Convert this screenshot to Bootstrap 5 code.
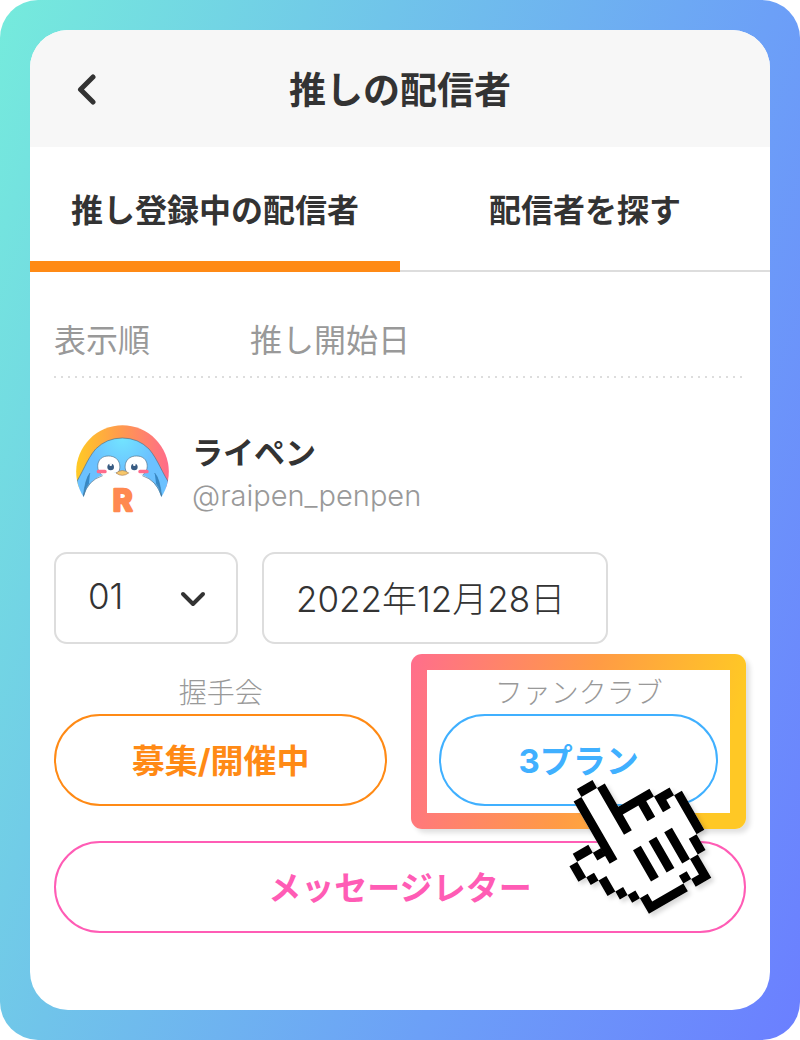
<!DOCTYPE html>
<html lang="ja">
<head>
<meta charset="utf-8">
<meta name="viewport" content="width=device-width, initial-scale=1">
<title>推しの配信者</title>
<link href="https://cdn.jsdelivr.net/npm/bootstrap@5.3.0/dist/css/bootstrap.min.css" rel="stylesheet">
<style>
  :root {
    --ink: #333;
    --muted: #999;
    --line: #ddd;
    --orange: #ff8a15;
    --blue: #40b0ff;
    --pink: #ff5cb5;
  }
  body {
    font-family: Inter, "Noto Sans CJK JP", sans-serif;
    color: var(--ink);
    background: #fff;
  }
  .backdrop {
    padding: 30px;
    border-radius: 38px;
    background: linear-gradient(109deg, #75ebdc 0%, #70c4ea 34%, #6ca0f7 67%, #6b7fff 100%);
  }
  .screen { border-radius: 38px; background: #fff; }
  .topbar { height: 117px; padding-top: 4px; background: #f7f7f7; }
  .topbar h1 { font-size: 37px; line-height: 48px; font-weight: 700; }
  .back-btn { left: 33px; }
  .tabs { height: 125px; }
  .tabs a {
    padding-top: 4px;
    font-size: 32px;
    font-weight: 700;
    color: var(--ink);
    border-bottom: 2px solid var(--line);
  }
  .tabs a.active { border-bottom: 11px solid var(--orange); padding-top: 13px; }
  .content { padding: 45px 24px; }
  .headings {
    gap: 100px;
    padding-bottom: 13px;
    font-size: 32px;
    line-height: 48px;
    color: var(--muted);
    background: repeating-linear-gradient(90deg, var(--line) 0 2px, transparent 2px 7px) bottom / 100% 2px no-repeat;
  }
  .profile { margin-top: 47px; margin-bottom: 34px; padding-left: 22px; gap: 23px; }
  .profile-name { font-size: 31px; line-height: 44px; font-weight: 700; padding-top: 6px; }
  .handle { font-size: 29px; line-height: 42px; font-weight: 300; color: var(--muted); }
  .fields { gap: 24px; }
  .field {
    height: 92px;
    border: 2px solid var(--line);
    border-radius: 13px;
    background: transparent;
    color: var(--ink);
    font-size: 35px;
    font-weight: 300;
    padding: 0 32px 4px;
  }
  .order-field { width: 184px; appearance: none; }
  .date-field { width: 346px; }
  .chevron { right: 32px; top: 38px; pointer-events: none; }
  .plans { margin-top: 10px; column-gap: 24px; }
  .plan { flex: 1 1 50%; padding-top: 16px; }
  .plan-label { padding-top: 2px; font-size: 28px; line-height: 42px; font-weight: 300; color: var(--muted); }
  .pill {
    --bs-btn-border-width: 2px;
    --bs-btn-border-radius: 46px;
    --bs-btn-font-size: 33px;
    --bs-btn-font-weight: 700;
    height: 92px;
    padding-top: 9px;
  }
  .pill-orange { --bs-btn-color: var(--orange); --bs-btn-border-color: var(--orange); }
  .pill-blue { --bs-btn-color: var(--blue); --bs-btn-border-color: var(--blue); }
  .pill-pink { --bs-btn-color: var(--pink); --bs-btn-border-color: var(--pink); }
  .highlight {
    padding: 16px;
    border-radius: 11px;
    background: linear-gradient(104deg, #ff6e8c, #ff9b45 50%, #ffc825 90%);
    box-shadow: 4px 4px 5px rgba(0, 0, 0, .12);
  }
  .highlight-inner { padding: 0 12px 7px; background: #fff; }
  .pointer { left: 138px; top: 106px; pointer-events: none; filter: drop-shadow(3px 3px 2px rgba(0, 0, 0, .15)); }
  .letter { margin-top: 12px; }
</style>
</head>
<body>
<div class="backdrop min-vh-100 d-flex">
  <main class="screen flex-grow-1 overflow-hidden">
    <header class="topbar position-relative d-flex align-items-center justify-content-center">
      <button type="button" class="back-btn btn position-absolute" aria-label="戻る">
        <svg class="d-block" width="24" height="34" viewBox="0 0 24 34" fill="none" stroke="#333" stroke-width="5" stroke-linecap="round" stroke-linejoin="round"><path d="M17 3 4.500 15.500 17 28"/></svg>
      </button>
      <h1 class="m-0">推しの配信者</h1>
    </header>

    <nav class="tabs d-flex" aria-label="配信者">
      <a href="#registered" class="active w-50 d-flex align-items-center justify-content-center text-decoration-none" aria-current="page">推し登録中の配信者</a>
      <a href="#search" class="w-50 d-flex align-items-center justify-content-center text-decoration-none">配信者を探す</a>
    </nav>

    <section class="content" id="registered">
      <div class="headings d-flex">
        <label for="order">表示順</label>
        <label for="start-date">推し開始日</label>
      </div>

      <div class="profile d-flex">
        <svg width="93" height="93" viewBox="48 44 279 279" role="img" aria-label="ライペン">
          <defs>
            <linearGradient id="hood" x1="0" x2="1"><stop offset="0" stop-color="#ffca24"/><stop offset=".5" stop-color="#ff9850"/><stop offset="1" stop-color="#ff6b8b"/></linearGradient>
            <radialGradient id="body-blue" gradientUnits="userSpaceOnUse" cx="187" cy="85" r="100"><stop offset="0" stop-color="#72e4ff"/><stop offset="1" stop-color="#6bc1ff"/></radialGradient>
            <clipPath id="disc"><circle cx="187.500" cy="184" r="139"/></clipPath>
          </defs>
          <g clip-path="url(#disc)">
            <rect x="48" y="44" width="279" height="190" fill="url(#hood)"/>
            <path d="M40 230C70 185 79 149 107 116Q140 83 187 83Q234 83 267 116C295 149 304 185 335 230V261H40Z" fill="url(#body-blue)"/>
            <path d="M40 230C70 185 79 149 107 116Q140 83 187 83Q234 83 267 116C295 149 304 185 335 230" fill="none" stroke="#526f86" stroke-width="2"/>
            <path d="M70 264Q83 210 128 194Q155 181 187 193Q219 181 247 194Q289 210 305 264Z" fill="#fff"/>
            <path d="M90 188Q76 205 70 258Q76 230 87 218M284 188Q299 205 305 258Q299 230 288 218" fill="#3589c9" stroke="#397dac" stroke-width="2"/>
            <path d="M70 258Q83 210 128 196M305 258Q290 210 247 196" fill="none" stroke="#587288" stroke-width="2"/>
          </g>
          <g fill="#fff" stroke="#526f86" stroke-width="2">
            <path d="M125 193C106 180 108 137 145 137C180 137 185 170 175 186"/>
            <path d="M200 186C190 170 195 137 230 137C267 137 269 180 249 193"/>
          </g>
          <path d="M124 194Q150 181 185 195L248 194Q220 180 190 190Z" fill="#fff"/>
          <g fill="#ff6b8b"><rect x="110" y="178" width="30" height="11" rx="5"/><rect x="235" y="178" width="31" height="11" rx="5"/></g>
          <g fill="#385b82"><circle cx="152" cy="170" r="10"/><circle cx="223" cy="170" r="10"/></g>
          <g fill="#fff"><circle cx="152" cy="163" r="4"/><circle cx="223" cy="163" r="4"/></g>
          <path d="M168 188Q187 173 206 188Q187 202 168 188Z" fill="#f7c76a" stroke="#ad8153" stroke-width="2"/>
          <text x="188" y="301" text-anchor="middle" font-family="Inter, sans-serif" font-size="90" font-weight="700" fill="#ff8950" stroke="#ff8950" stroke-width="8" stroke-linejoin="round">R</text>
        </svg>
        <div>
          <h2 class="profile-name m-0">ライペン</h2>
          <div class="handle">@raipen_penpen</div>
        </div>
      </div>

      <div class="fields d-flex">
        <div class="position-relative">
          <select id="order" class="field order-field"><option>01</option><option>02</option><option>03</option></select>
          <svg class="chevron position-absolute" width="26" height="20" viewBox="0 0 26 20" fill="none" stroke="#333" stroke-width="4" stroke-linecap="round" stroke-linejoin="round"><path d="M3 4 13 14 23 4"/></svg>
        </div>
        <input id="start-date" class="field date-field" type="text" value="2022年12月28日">
      </div>

      <div class="plans d-flex">
        <div class="plan text-center">
          <div class="plan-label" id="meet-label">握手会</div>
          <button type="button" class="btn pill pill-orange w-100" aria-describedby="meet-label">募集/開催中</button>
        </div>
        <div class="plan highlight position-relative text-center">
          <div class="highlight-inner">
            <div class="plan-label" id="fan-label">ファンクラブ</div>
            <button type="button" class="btn pill pill-blue w-100" aria-describedby="fan-label">3プラン</button>
          </div>
          <!-- Pixel hand drawn on a one-unit grid, then tilted -->
          <svg class="pointer position-absolute z-1" width="200" height="170" viewBox="0 0 200 170" aria-hidden="true">
            <g transform="rotate(-30) scale(9) translate(-.93 .35)">
              <path fill="#fff" d="M2 4H4V5H5V8H9V9H11V10H12V15H11V17H10V20H8V19H7V20H2V18H1V17H0V16H-1V14H-2V13H-3V11H-2V10H0V11H1V5H2Z"/>
              <path fill="#000" d="M2 4h2v1h-2zM1 5h1v8h-1zM4 5h1v3h4v1h-1v2h-1v-2h-2v2h-1zM9 9h2v1h-1v1h-1zM11 10h1v5h-1zM10 15h1v2h-1zM9 17h1v3h-2v-1h1zM7 18h1v1h-1zM2 18h1v1h4v1h-5zM1 17h1v1h-1zM0 16h1v1h-1zM-1 14h1v2h-1zM-2 13h1v1h-1zM-3 11h1v2h-1zM-2 10h2v1h-2zM0 11h1v1h-1zM4 13h1v4h-1zM6 13h1v4h-1zM8 13h1v4h-1z"/>
            </g>
          </svg>
        </div>
      </div>

      <button type="button" class="letter btn pill pill-pink w-100">メッセージレター</button>
    </section>
  </main>
</div>
<script src="https://cdn.jsdelivr.net/npm/bootstrap@5.3.0/dist/js/bootstrap.bundle.min.js"></script>
</body>
</html>
